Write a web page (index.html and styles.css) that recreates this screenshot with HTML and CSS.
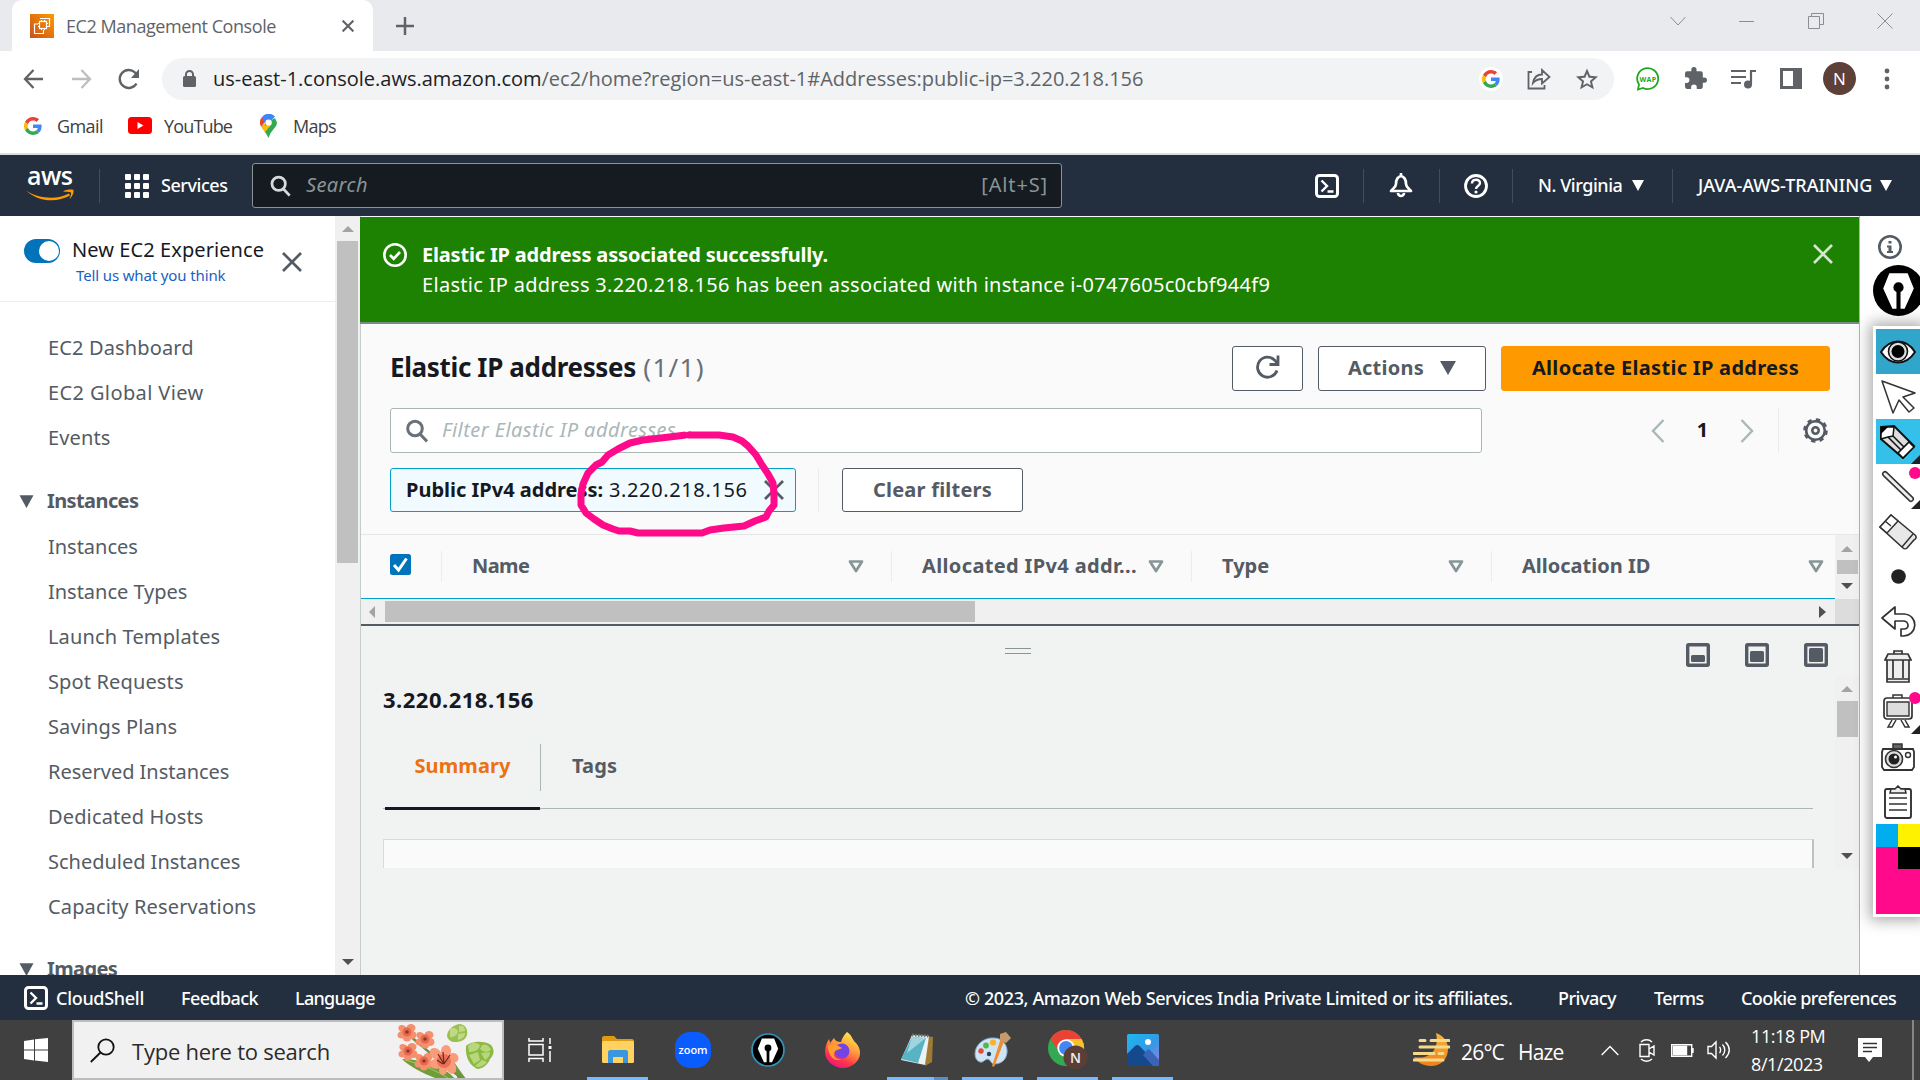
FILE: index.html
```html
<!DOCTYPE html>
<html lang="en">
<head>
<meta charset="utf-8">
<title>EC2 Management Console</title>
<link rel="stylesheet" href="styles.css">
</head>
<body>
<svg class="defs" width="0" height="0" aria-hidden="true">
  <symbol id="g" viewBox="0 0 48 48"><path fill="#ea4335" d="M24 9.500c3.500 0 6.700 1.200 9.200 3.600l6.900-6.900C35.900 2.400 30.500 0 24 0 14.600 0 6.500 5.400 2.600 13.200l8 6.200C12.400 13.700 17.700 9.500 24 9.500z"/><path fill="#4285f4" d="M47 24.600c0-1.600-.2-3.100-.4-4.600H24v9h12.900c-.6 3-2.200 5.500-4.700 7.200l7.700 6C44.400 38 47 31.800 47 24.600z"/><path fill="#fbbc05" d="M10.500 28.600A14.500 14.500 0 0 1 10.500 19.400l-8-6.200a24 24 0 0 0 0 21.600z"/><path fill="#34a853" d="M24 48c6.500 0 11.900-2.100 15.900-5.800l-7.700-6c-2.200 1.400-4.900 2.300-8.200 2.300-6.300 0-11.600-4.200-13.500-9.900l-8 6.200C6.500 42.600 14.600 48 24 48z"/></symbol>
  <symbol id="shell" viewBox="0 0 24 24"><rect x="1.500" y="1.500" width="21" height="21" rx="3" fill="none" stroke="#fff" stroke-width="3"/><path d="M6.500 6.500l5.500 5.500-5.500 5.500M12.500 17.500h6" fill="none" stroke="#fff" stroke-width="2.400"/></symbol>
  <symbol id="mag" viewBox="0 0 22 24"><circle cx="9" cy="9.500" r="7.300" fill="none" stroke="currentColor" stroke-width="3"/><path d="M14 15l7 7.500" stroke="currentColor" stroke-width="3"/></symbol>
  <symbol id="x" viewBox="0 0 20 20"><path d="M1 1l18 18M19 1L1 19" stroke="currentColor" stroke-width="2.700"/></symbol>
  <symbol id="down" viewBox="0 0 12 12"><path d="M0 1h12L6 12z" fill="currentColor"/></symbol>
  <symbol id="sort" viewBox="0 0 16 13"><path d="M2 1.500h12L8 11z" fill="none" stroke="#879596" stroke-width="2.700" stroke-linejoin="round"/></symbol>
  <symbol id="up-s" viewBox="0 0 12 6"><path d="M0 6L6 0l6 6z" fill="#a3a3a3"/></symbol>
  <symbol id="down-s" viewBox="0 0 12 6"><path d="M0 0h12L6 6z" fill="#505050"/></symbol>
  <symbol id="nib" viewBox="0 0 50 50"><path fill="#fff" d="M16 8h18l6 15-9 20h-4V26h-4v17h-4L10 23z"/><circle cx="25" cy="22" r="5" fill="#000"/></symbol>
</svg>

<div class="tabs">
  <div class="tab">
    <svg width="24" height="24" viewBox="0 0 24 24"><defs><linearGradient id="fav" x1="0" y1="1" x2="1" y2="0"><stop stop-color="#c8511b"/><stop offset="1" stop-color="#f90"/></linearGradient></defs><path fill="url(#fav)" d="M0 0h24v24H0z"/><g fill="none" stroke="#fff" stroke-width="1.200"><rect x="9.500" y="7.500" width="7" height="7"/><path d="M10 4.500h9.500v8H17M8 10H4.500v9.500h9V16M11.500 6v2M14.500 6v2M11.500 14v2M14.500 14v2M8 9.500h2M8 12.500h2M16 9.500h2"/></g></svg>
    <span class="tab-title">EC2 Management Console</span>
    <svg class="tab-x" width="12" height="12" viewBox="0 0 20 20"><path d="M1 1l18 18M19 1L1 19" stroke="#5f6368" stroke-width="3.600"/></svg>
  </div>
  <svg class="plus" width="18" height="18" viewBox="0 0 18 18"><path d="M9 0v18M0 9h18" stroke="#5f6368" stroke-width="2.500"/></svg>
  <div class="win">
    <svg width="16" height="16" viewBox="0 0 16 16"><path d="M.5 4l7.500 8 7.500-8"/></svg>
    <svg width="16" height="16" viewBox="0 0 16 16"><path d="M0 8.500h15"/></svg>
    <svg width="16" height="16" viewBox="0 0 16 16"><path d="M.5 3.500h11v12H.5zM3.500 3V.5h12v11H12"/></svg>
    <svg width="16" height="16" viewBox="0 0 16 16"><path d="M.5.500l15 15M15.500.5l-15 15"/></svg>
  </div>
</div>

<div class="toolbar">
  <div class="nav-btns">
    <svg width="21" height="20" viewBox="0 0 21 20"><path d="M20 10H2M10.500 1L2 10l8.500 9" fill="none" stroke="#5f6368" stroke-width="2.300"/></svg>
    <svg width="21" height="20" viewBox="0 0 21 20"><path d="M1 10h18M10.500 1l8.500 9-8.500 9" fill="none" stroke="#bcbec1" stroke-width="2.300"/></svg>
    <svg width="22" height="22" viewBox="0 0 22 22"><path d="M18.500 15.500A9 9 0 1 1 17 4.500l2 2.500" fill="none" stroke="#5f6368" stroke-width="2.400"/><path d="M21 1v9h-8z" fill="#5f6368"/></svg>
  </div>
  <div class="omni">
    <svg width="13" height="18" viewBox="0 0 13 18"><rect y="6" width="13" height="11" rx="1.500" fill="#5f6368"/><path d="M3 7V4.500a3.500 3.500 0 0 1 7 0V7" fill="none" stroke="#5f6368" stroke-width="2"/></svg>
    <span class="url"><b>us-east-1.console.aws.amazon.com</b>/ec2/home?region=us-east-1#Addresses:public-ip=3.220.218.156</span>
    <span class="gbadge"><svg width="18" height="18"><use href="#g"/></svg></span>
    <svg width="24" height="22" viewBox="0 0 24 22" fill="none" stroke="#5f6368" stroke-width="1.800"><path d="M5 4H1.500v16.500h16V17M6 15c1-6 4-8.500 9-8.500V2l7.500 7L15 15.500V11c-4 0-6.500 1-9 4z"/></svg>
    <svg class="star" width="22" height="22" viewBox="0 0 24 24"><path fill="#5f6368" d="M24 9.200l-8.600-.7L12 .5 8.600 8.500 0 9.200l6.500 5.700-2 8.400 7.500-4.500 7.500 4.500-2-8.400zM12 16.600l-4.300 2.600 1.100-4.900-3.700-3.300 5-.4L12 6l1.900 4.600 5 .4-3.700 3.300 1.100 4.900z"/></svg>
  </div>
  <div class="exts">
    <svg width="24" height="24" viewBox="0 0 24 24"><path d="M2 22.500l1-5A10.500 10.500 0 1 1 7 21z" fill="#fff" stroke="#22a722" stroke-width="1.800"/><text x="12" y="14.500" class="wap">WAP</text></svg>
    <svg width="23" height="23" viewBox="1 1 22 22"><path fill="#5f6368" d="M20.500 11H19V7c0-1.100-.9-2-2-2h-4V3.500a2.500 2.500 0 0 0-5 0V5H4c-1.100 0-2 .9-2 2v3.800h1.500a2.700 2.700 0 0 1 0 5.400H2V20c0 1.100.9 2 2 2h3.800v-1.500a2.700 2.700 0 0 1 5.400 0V22H17c1.100 0 2-.9 2-2v-4h1.500a2.500 2.500 0 0 0 0-5z"/></svg>
    <svg width="25" height="20" viewBox="0 0 25 20"><path d="M0 2h15M0 8h15M0 14h10" stroke="#5f6368" stroke-width="2.200"/><path d="M20 15V2h5" fill="none" stroke="#5f6368" stroke-width="2.200"/><circle cx="17" cy="15.500" r="4" fill="#5f6368"/></svg>
    <svg width="22" height="21" viewBox="0 0 22 21"><path fill="#5f6368" fill-rule="evenodd" d="M0 0h22v21H0zM3 3v15h10V3z"/></svg>
    <span class="avatar">N</span>
    <svg width="6" height="22" viewBox="0 0 6 22" fill="#5f6368"><circle cx="3" cy="3" r="2.400"/><circle cx="3" cy="11" r="2.400"/><circle cx="3" cy="19" r="2.400"/></svg>
  </div>
</div>

<div class="bookmarks">
  <svg width="18" height="18"><use href="#g"/></svg><span class="bm1">Gmail</span>
  <svg width="24" height="17" viewBox="0 0 24 17"><rect width="24" height="17" rx="3.500" fill="#f00"/><path d="M9.500 5v7l6-3.500z" fill="#fff"/></svg><span class="bm2">YouTube</span>
  <svg width="17" height="24" viewBox="0 0 17 24"><path fill="#34a853" d="M1 12l4 6c1.500 2 2.500 4 3.500 6 1-3 2-5 4-7.500 2-2.500 4.500-5 4.500-8L15 4z"/><path fill="#fbbc04" d="M1 12.500L11.500 5l.5 5-7 8z"/><path fill="#ea4335" d="M2 3a8.500 8.500 0 0 0-1 9.500L6 7z"/><path fill="#4285f4" d="M2 3a8.500 8.500 0 0 1 13-.5L6 12z"/><circle cx="8.500" cy="8.500" r="3.100" fill="#fff"/></svg><span class="bm3">Maps</span>
</div>

<header class="aws">
  <div class="aws-left">
    <div class="logo"><span>aws</span><svg width="48" height="12" viewBox="0 0 48 12"><path d="M0 1.500C13 10 31 11 43 4.500l1 2C31 14 12 13 0 1.500z" fill="#f90"/><path d="M37 2.500C40 .5 45 0 47.500 1c.5 3-1.500 7-4 9 1-3 2-5 1.500-6.500-2-.8-5-.5-8-1z" fill="#f90"/></svg></div>
    <i class="sep"></i>
    <svg width="24" height="24" viewBox="0 0 24 24" fill="#fff"><rect width="6" height="6" rx="1"/><rect x="9" width="6" height="6" rx="1"/><rect x="18" width="6" height="6" rx="1"/><rect y="9" width="6" height="6" rx="1"/><rect x="9" y="9" width="6" height="6" rx="1"/><rect x="18" y="9" width="6" height="6" rx="1"/><rect y="18" width="6" height="6" rx="1"/><rect x="9" y="18" width="6" height="6" rx="1"/><rect x="18" y="18" width="6" height="6" rx="1"/></svg>
    <span class="nt">Services</span>
    <div class="nsearch"><svg width="21" height="22"><use href="#mag"/></svg><em>Search</em><span>[Alt+S]</span></div>
  </div>
  <div class="aws-right">
    <svg width="24" height="24"><use href="#shell"/></svg>
    <i class="sep"></i>
    <svg width="24" height="25" viewBox="0 0 24 25"><path d="M12 3c-4 1-5 4-5 8 0 3-3 4.500-5 7h20c-2-2.500-5-4-5-7 0-4-1-7-5-8z" fill="none" stroke="#fff" stroke-width="2.700" stroke-linejoin="round"/><path d="M12 0v4M9 20a3 3 0 0 0 6 0" fill="none" stroke="#fff" stroke-width="2.600"/></svg>
    <i class="sep"></i>
    <svg width="24" height="24" viewBox="0 0 24 24"><circle cx="12" cy="12" r="10.500" fill="none" stroke="#fff" stroke-width="2.800"/><path d="M8 9.500c0-5 8-5 8-.5 0 3-4 3-4 6" fill="none" stroke="#fff" stroke-width="2.400"/><circle cx="12" cy="18" r="1.600" fill="#fff"/></svg>
    <i class="sep"></i>
    <span class="nt">N. Virginia</span><svg class="w" width="12" height="12"><use href="#down"/></svg>
    <i class="sep"></i>
    <span class="nt acct">JAVA-AWS-TRAINING</span><svg class="w" width="12" height="12"><use href="#down"/></svg>
  </div>
</header>

<div class="page">
  <aside class="side">
    <div class="exp">
      <i class="toggle"></i>
      <div><p class="exp-t">New EC2 Experience</p><a>Tell us what you think</a></div>
      <svg width="20" height="20"><use href="#x"/></svg>
    </div>
    <nav class="menu">
      <a>EC2 Dashboard</a><a class="wide">EC2 Global View</a><a>Events</a>
      <h3><svg width="15" height="14"><use href="#down"/></svg>Instances</h3>
      <a class="tight">Instances</a><a class="tight">Instance Types</a><a>Launch Templates</a><a>Spot Requests</a><a>Savings Plans</a><a class="tight">Reserved Instances</a><a>Dedicated Hosts</a><a class="tight">Scheduled Instances</a><a>Capacity Reservations</a>
      <h3 class="last"><svg width="15" height="14"><use href="#down"/></svg>Images</h3>
    </nav>
  </aside>
  <div class="vbar side-bar"><svg width="12" height="6"><use href="#up-s"/></svg><i></i><svg class="end" width="12" height="6"><use href="#down-s"/></svg></div>

  <main class="main">
    <section class="flash">
      <svg width="24" height="24" viewBox="0 0 24 24"><circle cx="12" cy="12" r="10.700" fill="none" stroke="#fff" stroke-width="2.600"/><path d="M7 12l3.700 3.700L17 9" fill="none" stroke="#fff" stroke-width="2.700"/></svg>
      <div><strong>Elastic IP address associated successfully.</strong><p>Elastic IP address 3.220.218.156 has been associated with instance i-0747605c0cbf944f9</p></div>
      <svg class="fx" width="20" height="20"><use href="#x"/></svg>
    </section>
    <section class="list">
      <div class="head">
        <h1>Elastic IP addresses <span>(1/1)</span></h1>
        <button class="btn ref"><svg width="25" height="25" viewBox="0 0 25 25"><path d="M22 15.500A10 10 0 1 1 20 5.500l2 2.500" fill="none" stroke="#545b64" stroke-width="2.800"/><path d="M23 .500v9h-8.500" fill="none" stroke="#545b64" stroke-width="2.800"/></svg></button>
        <button class="btn act">Actions<svg width="16" height="14" viewBox="0 0 16 14"><path d="M0 0h16L8 14z" fill="#545b64"/></svg></button>
        <button class="btn pri">Allocate Elastic IP address</button>
      </div>
      <div class="filter">
        <div class="fin"><svg width="22" height="24"><use href="#mag"/></svg><em>Filter Elastic IP addresses</em></div>
        <div class="pager">
          <svg width="14" height="24" viewBox="0 0 14 24"><path d="M12.500 1L2 12l10.500 11"/></svg><b>1</b><svg width="14" height="24" viewBox="0 0 14 24"><path d="M1.500 1L12 12 1.500 23"/></svg>
        </div>
        <svg class="gear" width="25" height="25" viewBox="-12.500 -12.500 25 25"><circle r="9.300" fill="none" stroke="#545b64" stroke-width="2.600"/><circle r="10.900" fill="none" stroke="#545b64" stroke-width="2.800" stroke-dasharray="4.300 4.260"/><circle r="3.200" fill="none" stroke="#545b64" stroke-width="2.600"/></svg>
      </div>
      <div class="tokens">
        <div class="token"><b>Public IPv4 address:</b><span>3.220.218.156</span><svg width="20" height="20"><use href="#x"/></svg></div>
        <i></i>
        <button class="btn clr">Clear filters</button>
      </div>
      <div class="table">
        <div class="thead">
          <div class="cb"><svg width="21" height="21" viewBox="0 0 21 21"><rect width="21" height="21" rx="2.500" fill="#0073bb"/><path d="M4 11l4.500 5L16.500 4.500" fill="none" stroke="#fff" stroke-width="3"/></svg></div>
          <div class="th"><span class="c1">Name</span><svg width="16" height="13"><use href="#sort"/></svg></div>
          <div class="th"><span class="c2">Allocated IPv4 addr...</span><svg width="16" height="13"><use href="#sort"/></svg></div>
          <div class="th"><span>Type</span><svg width="16" height="13"><use href="#sort"/></svg></div>
          <div class="th"><span>Allocation ID</span><svg width="16" height="13"><use href="#sort"/></svg></div>
        </div>
        <div class="vbar tbar"><svg width="12" height="6"><use href="#up-s"/></svg><i></i><svg class="end" width="12" height="6"><use href="#down-s"/></svg></div>
      </div>
      <div class="hbar"><svg width="6" height="12" viewBox="0 0 6 12"><path d="M6 0v12L0 6z" fill="#a3a3a3"/></svg><i></i><svg class="end" width="7" height="12" viewBox="0 0 7 12"><path d="M0 0v12l7-6z" fill="#505050"/></svg><b></b></div>
    </section>
    <section class="split">
      <div class="tools">
        <i class="grip"></i>
        <svg width="24" height="24" viewBox="0 0 24 24"><rect x="1.700" y="1.700" width="20.600" height="20.600" rx="1" fill="none" stroke="#545b64" stroke-width="3.400"/><rect x="5" y="12" width="14" height="7" rx="1.500" fill="#545b64"/></svg>
        <svg width="24" height="24" viewBox="0 0 24 24"><rect x="1.700" y="1.700" width="20.600" height="20.600" rx="1" fill="none" stroke="#545b64" stroke-width="3.400"/><rect x="5" y="8" width="14" height="11" rx="1.500" fill="#545b64"/></svg>
        <svg width="24" height="24" viewBox="0 0 24 24"><rect x="1.700" y="1.700" width="20.600" height="20.600" rx="1" fill="none" stroke="#545b64" stroke-width="3.400"/><rect x="5" y="5" width="14" height="14" rx="1.500" fill="#545b64"/></svg>
      </div>
      <div class="detail">
        <div class="dcol">
          <h2>3.220.218.156</h2>
          <div class="dtabs"><span class="on">Summary</span><span class="off">Tags</span></div>
          <div class="card"></div>
        </div>
        <div class="vbar dbar"><svg width="12" height="6"><use href="#up-s"/></svg><i></i><svg class="end" width="12" height="6"><use href="#down-s"/></svg></div>
      </div>
    </section>
  </main>
  <div class="gutter">
    <svg width="24" height="24" viewBox="0 0 24 24"><circle cx="12" cy="12" r="10.700" fill="none" stroke="#545b64" stroke-width="2.600"/><path d="M10.500 6h3v2.500h-3zM9 10.500h4.500V16H15v2H9v-2h1.500v-3.500H9z" fill="#545b64"/></svg>
  </div>
</div>

<footer class="foot">
  <svg width="24" height="24"><use href="#shell"/></svg><span class="f1">CloudShell</span><span class="f2">Feedback</span><span class="f3">Language</span>
  <span class="f4">© 2023, Amazon Web Services India Private Limited or its affiliates.</span><span class="f5">Privacy</span><span class="f6">Terms</span><span class="f7">Cookie preferences</span>
</footer>

<div class="taskbar">
  <div class="start"><svg width="24" height="24" viewBox="0 0 24 24"><path fill="#fff" d="M0 3l10-1.500v10H0zM11 1.300L24 0v11.500H11zM0 12.500h10v10L0 21zM11 12.500h13V24l-13-1.500z"/></svg></div>
  <div class="tsearch">
    <svg width="25" height="25" viewBox="0 0 25 25"><circle cx="16" cy="9" r="7.700" fill="none" stroke="#111" stroke-width="1.800"/><path d="M10.500 14.500L.8 24" stroke="#111" stroke-width="1.800"/></svg>
    <span>Type here to search</span>
    <svg class="flower" width="102" height="56" viewBox="0 0 102 56">
      <path d="M5 35c12 0 25 3 36 8 8 3 14 8 18 13H43C28 50 14 44 5 35z" fill="#6f9e38"/><path d="M8 36c15 4 31 10 46 20" stroke="#a9c46c" fill="none"/>
      <path d="M13 12c8 8 28 26 54 44M50 21c3 12 10 22 20 35h-9z" fill="#6d9a3c"/><path d="M13 12c12 10 30 26 54 44" stroke="#6f8f45" stroke-width="2.500" fill="none"/>
      <g id="b" fill="#f58f6e"><ellipse cx="6" cy="5" rx="5" ry="3.500" transform="rotate(30 6 5)"/><ellipse cx="14" cy="4" rx="4.500" ry="4"/><ellipse cx="5" cy="11" rx="4.500" ry="3.500"/><ellipse cx="15" cy="11" rx="4.500" ry="4"/><ellipse cx="10" cy="14" rx="4" ry="3.500"/><circle cx="10" cy="8" r="4.500" fill="#e4694f"/><circle cx="10" cy="8" r="1.800" fill="#8f3628"/></g>
      <use href="#b" x="18" y="7"/><use href="#b" x="1" y="19"/><use href="#b" x="17" y="29"/>
      <g fill="#fa9b7b"><ellipse cx="39" cy="30" rx="5" ry="7" transform="rotate(-50 39 30)"/><ellipse cx="49" cy="27" rx="5" ry="6"/><ellipse cx="56" cy="34" rx="5.500" ry="5"/><ellipse cx="39" cy="40" rx="6" ry="5"/><ellipse cx="54" cy="43" rx="5" ry="7" transform="rotate(-20 54 43)"/><ellipse cx="46" cy="46" rx="4" ry="5"/><circle cx="47" cy="37" r="7" fill="#ec7257"/></g><path d="M47 40l-6-10M47 40l-1-12M47 40l6-9M46 40l-6-4" stroke="#6e271e" stroke-width="1.200" fill="none"/>
      <path d="M50 12c0-7 8-12 13-12 6 1 8 6 7 11-2 6-7 7-12 7-4 0-7-2-8-6z" fill="#9bc052"/><path d="M53 5c4-2 6-1 8 2-1 4-3 6-8 6zM62 2c4-1 6 1 6 5l-6 1zM61 10l7-1c0 4-3 6-7 7z" fill="#bfd985"/>
      <path d="M69 22c5-5 18-6 25-1 4 5 3 10-1 14-2 6-8 10-13 10-7-4-12-11-11-23z" fill="#8db943"/><path d="M71 22c4-4 8-4 12-1-1 5-5 7-11 7zM85 21c4-1 8 1 9 5-4 3-8 2-11-1zM72 31l9-3 2 8-6 4zM84 29l9-1c0 4-2 6-5 8zM78 42l7-6 5 2c-2 3-6 5-10 5z" fill="#b6d77a"/>
    </svg>
  </div>
  <div class="tview"><svg width="24" height="24" viewBox="0 0 24 24" fill="none" stroke="#fff" stroke-width="1.500"><path d="M1 0v3h14V0M1 6.500h14v10.500H1zM1 24v-3.500h14V24M22 0v6M22 13v11"/><path d="M20.500 8h3v3h-3z" fill="#fff" stroke="none"/></svg></div>
  <div class="apps">
    <div class="on"><svg width="34" height="28" viewBox="0 0 34 28"><path d="M1 2c0-1 1-2 2-2h10l3 3h15c1 0 2 1 2 2v8H1z" fill="#e09a12"/><rect x="1" y="5" width="32" height="22" rx="1.500" fill="#ffd262"/><path d="M7 27V16c0-1 1-2 2-2h16c1 0 2 1 2 2v11h-5v-6H12v6z" fill="#3a96dd"/></svg></div>
    <div><svg width="36" height="36" viewBox="0 0 36 36"><rect width="36" height="36" rx="15" fill="#0b5cff"/><text x="18" y="21.500" class="zm">zoom</text></svg></div>
    <div><svg width="34" height="34" viewBox="0 0 50 50"><circle cx="25" cy="25" r="23.500" fill="#000" stroke="#3095bd" stroke-width="2.500"/><use href="#nib"/></svg></div>
    <div><svg width="35" height="36" viewBox="0 0 35 36"><defs><linearGradient id="ff" x1=".8" y1="0" x2=".3" y2="1"><stop stop-color="#fff14f"/><stop offset=".45" stop-color="#ff9640"/><stop offset=".75" stop-color="#ff3647"/><stop offset="1" stop-color="#e31587"/></linearGradient></defs><path fill="url(#ff)" d="M22 0c6 4 5 8 9 11 3 3 4 7 4 10 0 8-8 15-17 15S0 29 0 20c0-5 2-10 4-13l1 4 4-5c1 3 4 4 7 4 1-4 3-7 6-10z"/><circle cx="17" cy="19" r="7.500" fill="#7542e5"/><path d="M3 14c4-3 8-2 14 2-3 2-6 1-8 5-1 4 3 7 8 6-8 4-14-4-14-13z" fill="#ff9d2e"/></svg></div>
    <div class="on multi"><svg width="35" height="34" viewBox="0 0 35 34"><path d="M26 3l7 1-1 25-7 4z" fill="#a07a35"/><path d="M12 2l17 1-4 29-24-5z" fill="#e9f3f4"/><path d="M12 4l14 1-8 25-17-4z" fill="#58b3c4"/><path d="M12 4l14 1L7 20z" fill="#9fd6de"/><path d="M12 2l17 1" stroke="#6d7577" stroke-width="3" stroke-dasharray="1.500 1.500"/></svg></div>
    <div class="on"><svg width="37" height="42" viewBox="0 0 37 42"><path d="M1 25C1 15 11 8 20 9c9 0 14 8 13 15-1 8-7 11-13 11-3 0-3-4-6-5-3 0-5 4-8 3-3-1-5-4-5-8z" fill="#cfe4f5" stroke="#83abc9"/><circle cx="7" cy="22" r="2.700" fill="#e3493c"/><circle cx="12" cy="16.500" r="2.900" fill="#54b948"/><circle cx="19" cy="13.500" r="3.100" fill="#f9b22c"/><circle cx="15" cy="25" r="2.200" fill="#29445e"/><path d="M31 10L20 38l-2-1 9-28z" fill="#ef8e2b"/><path d="M26 5l6-2 5 6-5 5-6-2z" fill="#c79a6b"/></svg></div>
    <div class="on"><svg width="40" height="40" viewBox="0 0 40 40"><circle cx="18" cy="18" r="18" fill="#34a853"/><path d="M2.400 9A18 18 0 0 1 33.600 9L36 14 18 18 10 20z" fill="#ea4335"/><path d="M33.600 9H18l8 14-8 13A18 18 0 0 0 33.600 9z" fill="#fbc02d"/><circle cx="18" cy="18" r="8.700" fill="#fff"/><circle cx="18" cy="18" r="6.900" fill="#4285f4"/><circle cx="27.500" cy="27.500" r="12" fill="#5a3f36"/><text x="27.500" y="32.500" class="nn">N</text></svg></div>
    <div class="on"><svg width="32" height="32" viewBox="0 0 32 32"><defs><linearGradient id="ph" x2="1" y2="1"><stop stop-color="#1fb6ee"/><stop offset=".55" stop-color="#329ae8"/><stop offset="1" stop-color="#a27bd9"/></linearGradient></defs><rect width="32" height="32" rx="1.500" fill="url(#ph)"/><path d="M0 20l8-8c1.500-1.500 3-1.500 4.500 0L32 32H0z" fill="#144a8c"/><path d="M16 21l4-5c1-1 2-1 3 0l9 10v6h-6z" fill="#3a64b8"/><circle cx="21" cy="8" r="3" fill="#fff"/></svg></div>
  </div>
  <div class="tray">
    <svg width="37" height="34" viewBox="0 0 37 34"><defs><linearGradient id="mo" x2="0" y2="1"><stop stop-color="#f5b63a"/><stop offset="1" stop-color="#f0801a"/></linearGradient></defs><path d="M23 0c8 3 12 9 12 16 0 10-7 17-17 17-8 0-14-4-17-9 14 3 26-6 22-24z" fill="url(#mo)"/><path d="M7 7.500h5M18 7.500h18M7 14h29M1 20.500h20M26 20.500h4M1 27h29" stroke="#f7d98c" stroke-width="3" stroke-linecap="round"/></svg>
    <span class="deg">26°C</span><span class="haze">Haze</span>
    <svg width="18" height="11" viewBox="0 0 18 11"><path d="M.7 10L9 1.500l8.300 8.500"/></svg>
    <svg width="17" height="23" viewBox="0 0 17 23"><path d="M1 5.500h9v12H1zM10 10l5-3v9l-5-3M2 3c3-3 8-3 11 0M2 20c3 3 8 3 11 0"/></svg>
    <svg width="23" height="13" viewBox="0 0 23 13"><path d="M.7.700h20v11.600H.7zM22 4v5"/><path d="M2.500 2.500h13v8h-13z" fill="#fff"/></svg>
    <svg width="23" height="20" viewBox="0 0 23 20"><path d="M1 6.500h3.500L9 2v16l-4.500-4.500H1zM12.500 7c1.500 1.500 1.500 4.500 0 6M15.500 4.500c3 3 3 8 0 11M18.500 2c5 5 5 11 0 16"/></svg>
    <div class="clock"><span>11:18 PM</span><span>8/1/2023</span></div>
    <svg width="24" height="24" viewBox="0 0 24 24"><path d="M0 0h24v19H15l-4 5-4-5H0z" fill="#fff" stroke="none"/><path d="M5 5.500h14M5 9.500h14M5 13.500h9" stroke="#333" stroke-width="1.300"/></svg>
    <i class="desk"></i>
  </div>
</div>

<svg class="ink" width="210" height="114" viewBox="576 426 210 114"><path d="M686 435L661 438 643 440 630 443 618 449 608 455 602 462 596 465 588 473 583 484 581 494V505L586 513 594 519 603 525 613 529 619 531 630 531 638 533H702L710 530 724 528 744 526 755 521 766 517 769 511 774 505V494L773 483 768 474 762 465 756 455 748 446 742 441 733 437 719 435 688 435 687 432"/></svg>

<svg class="pen-badge" width="51" height="51" viewBox="0 0 50 50"><circle cx="25" cy="25" r="25" fill="#000"/><use href="#nib"/></svg>
<div class="pens">
  <div class="p eye"><svg width="36" height="24" viewBox="0 0 36 24"><path d="M1 12C10-2 26-2 35 12 26 26 10 26 1 12z" fill="#fff" stroke="#111" stroke-width="2"/><circle cx="18" cy="11.500" r="9.500" fill="#ddd" stroke="#111" stroke-width="1.600"/><circle cx="18" cy="11.500" r="6.500" fill="#000"/></svg></div>
  <div class="p"><svg width="36" height="34" viewBox="0 0 36 34"><path d="M2 1l33 12-12 4 11 11-5 4-10-12-6 13z" fill="#fff" stroke="#333" stroke-width="1.500" stroke-linejoin="round"/></svg></div>
  <div class="p pencil cor"><svg width="36" height="34" viewBox="0 0 36 34"><path d="M1 2l13-1 20 20-11 12L1 14z" fill="#ddd" stroke="#111" stroke-width="2"/><path d="M1 2h13l-1 9-5 1-7 2z" fill="#fff" stroke="#111" stroke-width="1.500"/><path d="M1 2h7L1 9z" fill="#000"/><path d="M13 11l15 15M8 12l14 14" stroke="#111" stroke-width="1.500" fill="none"/><path d="M29 17l5 5-11 11-5-5z" fill="#fff" stroke="#111" stroke-width="1.700"/></svg></div>
  <div class="p cor pink"><svg width="34" height="33" viewBox="0 0 34 33"><path d="M4 4l26 25" stroke="#333" stroke-width="6" stroke-linecap="round"/><path d="M4 4l26 25" stroke="#eee" stroke-width="3" stroke-linecap="round"/></svg></div>
  <div class="p"><svg width="38" height="36" viewBox="0 0 38 36"><path d="M12 1l24 20c2 2 1 4-1 5l-7 8c-1 1-3 1-4 0L1 13z" fill="#e8e8e8" stroke="#333" stroke-width="1.600"/><path d="M12 1l7 6-11 12-7-6z" fill="#fff" stroke="#333" stroke-width="1.500"/><path d="M34 20L23 33M6 7l6 5" fill="none" stroke="#333" stroke-width="1.500"/></svg></div>
  <div class="p"><svg width="15" height="15"><circle cx="7.500" cy="7.500" r="7.300" fill="#222"/></svg></div>
  <div class="p"><svg width="35" height="31" viewBox="0 0 35 31"><path d="M1 12L14 1v7h9c15 1 14 22-1 22h-2v-7h3c6 0 5-8-1-8h-8v8z" fill="#fff" stroke="#333" stroke-width="1.700" stroke-linejoin="round"/></svg></div>
  <div class="p"><svg width="28" height="33" viewBox="0 0 28 33"><path d="M10 4V1h8v3M4 4h20l3 6H1zM3 10v19h22V10M3 28v4h22v-4M9 10v18M19 10v18" fill="#eee" stroke="#333" stroke-width="1.700"/></svg></div>
  <div class="p cor pink"><svg width="30" height="35" viewBox="0 0 30 35"><path d="M10 4V1h9v3M9 26l-4 7h4l4-7M18 26l4 7h4l-4-7" fill="#fff" stroke="#333" stroke-width="1.500"/><rect x="1" y="4" width="28" height="21" rx="3" fill="#fff" stroke="#333" stroke-width="1.700"/><path d="M4 8h22v14H4z" fill="#ddd" stroke="#333" stroke-width="1.400"/></svg></div>
  <div class="p"><svg width="34" height="28" viewBox="0 0 34 28"><path d="M12 6V1h9v5" fill="#666" stroke="#333" stroke-width="1.500"/><path d="M2 6h30l1 3v15l-2 3H3l-2-3V9z" fill="#fff" stroke="#333" stroke-width="1.800"/><circle cx="13" cy="16" r="8.500" fill="#ddd" stroke="#333" stroke-width="1.600"/><circle cx="13" cy="16" r="5.500" fill="#222"/><circle cx="14.500" cy="14" r="1.500" fill="#fff"/><circle cx="27" cy="12" r="2.500" fill="none" stroke="#333" stroke-width="1.400"/></svg></div>
  <div class="p"><svg width="28" height="34" viewBox="0 0 28 34"><rect x="1" y="4" width="26" height="29" rx="2" fill="#fff" stroke="#333" stroke-width="1.900"/><path d="M6 8l1-4h4l3-3 3 3h4l1 4z" fill="#eee" stroke="#333" stroke-width="1.500"/><path d="M5 13h18M5 19h18M5 25h18" stroke="#333" stroke-width="1.500"/></svg></div>
  <div class="pal"><i class="cy"></i><i class="ye"></i><i class="pk"></i><i class="bk"></i></div>
</div>
</body>
</html>
```
FILE: styles.css
```css
* { box-sizing: border-box; }
body { margin: 0; width: 1920px; height: 1080px; overflow: hidden; position: relative; background: #fff; color: #16191f; font: 20px/30px "Noto Sans", sans-serif; display: flex; flex-direction: column; }
svg { display: block; flex: none; }
p, h1, h2, h3 { margin: 0; font-size: inherit; }
.defs { position: absolute; }
em { font-style: italic; }

/* browser chrome */
.tabs { height: 51px; flex: none; display: flex; align-items: center; background: #e8eaed; padding-left: 12px; font-family: "Open Sans", sans-serif; }
.tab { width: 361px; height: 51px; background: #fff; border-radius: 10px 10px 0 0; display: flex; align-items: center; padding-left: 18px; }
.tab-title { margin-left: 12px; width: 276px; font-size: 18px; letter-spacing: -.44px; color: #5f6368; }
.plus { margin-left: 23px; }
.win { margin-left: auto; margin-right: 27px; margin-top: -9px; display: flex; gap: 53px; }
.win path { fill: none; stroke: #8a8d91; stroke-width: 1; }
.toolbar { height: 55px; flex: none; display: flex; align-items: center; font-family: "Open Sans", sans-serif; }
.nav-btns { display: grid; grid-template-columns: 48px 47px 44px; align-items: center; padding-left: 23px; width: 162px; }
.omni { width: 1452px; height: 42px; border-radius: 21px; background: #f1f3f4; display: flex; align-items: center; padding-left: 21px; }
.url { margin-left: 17px; width: 1262px; font-size: 20px; color: #5f6368; white-space: nowrap; }
.url b { font-weight: 400; color: #202124; }
.gbadge { width: 24px; height: 24px; border-radius: 12px; background: #fff; display: grid; place-items: center; margin-left: 4px; margin-right: 24px; }
.star { margin-left: 25px; }
.exts { display: grid; grid-template-columns: 48px 47px 49px 43px 61px 10px; align-items: center; padding-left: 22px; }
.wap { font: 700 7px "Open Sans", sans-serif; fill: #22a722; text-anchor: middle; letter-spacing: .4px; }
.avatar { width: 33px; height: 33px; border-radius: 17px; background: #5d4037; color: #fff; font-size: 17px; line-height: 33px; text-align: center; }
.bookmarks { height: 49px; padding-bottom: 8px; flex: none; border-bottom: 2px solid #dadce0; display: flex; align-items: center; padding-left: 24px; font: 18px "Open Sans", sans-serif; color: #3c4043; }
.bm1 { margin-left: 15px; width: 71px; letter-spacing: -.57px; }
.bm2 { margin-left: 12px; width: 96px; letter-spacing: -.85px; }
.bm3 { margin-left: 16px; letter-spacing: -.7px; }

/* console header */
.aws { height: 61px; flex: none; background: #232f3e; color: #fff; display: flex; align-items: center; }
.aws-left { display: grid; grid-template-columns: 73px 26px 36px 91px 810px; align-items: center; padding-left: 26px; width: 1315px; }
.logo { display: flex; flex-direction: column; height: 46px; }
.logo span { font: 600 25px/25px "Open Sans", sans-serif; letter-spacing: -.6px; padding-left: 1px; }
.logo svg { margin-top: 1px; }
.sep { width: 1px; height: 34px; background: #414d5c; }
.nt { font-size: 18px; font-weight: 500; letter-spacing: -.45px; white-space: nowrap; padding-bottom: 2px; }
.acct { letter-spacing: 0; margin-left: 1px; }
.nsearch { height: 45px; border: 1px solid #879596; border-radius: 3px; background: #161a21; display: flex; align-items: center; padding: 0 13px 0 17px; color: #879596; }
.nsearch svg { color: #d5dbdb; }
.nsearch em { margin-left: 15px; letter-spacing: .39px; padding-bottom: 2px; }
.nsearch span { margin-left: auto; letter-spacing: .85px; padding-bottom: 2px; }
.aws-right { display: grid; grid-template-columns: 48px 26px 50px 25px 48px 26px 94px 40px 25px 183px 12px; align-items: center; }
.w { color: #fff; margin-top: -2px; }

/* page */
.page { height: 759px; flex: none; display: flex; overflow: hidden; }
.side { width: 335px; flex: none; overflow: hidden; }
.exp { height: 86px; border-bottom: 1px solid #eaeded; display: flex; padding: 19px 0 0 24px; }
.exp > div { width: 210px; margin-left: 12px; }
.exp > svg { margin-top: 17px; color: #545b64; width: 20px; }
.toggle { width: 36px; height: 24px; margin-top: 4px; border-radius: 12px; background: #0073bb; display: flex; padding: 2px 1px 2px 15px; }
.toggle::before { content: ""; width: 20px; height: 20px; border-radius: 10px; background: #fff; }
.exp-t { line-height: 29px; letter-spacing: .08px; white-space: nowrap; }
.exp a { display: block; margin: -1px 0 0 4px; font-size: 15px; line-height: 24px; letter-spacing: -.13px; color: #1c5fc0; }
.menu { padding-top: 23px; color: #545b64; }
.menu a { display: block; height: 45px; line-height: 45px; padding-left: 48px; letter-spacing: .14px; }
.menu .wide { letter-spacing: .38px; }
.menu .tight { letter-spacing: -.02px; }
.menu h3 { display: flex; align-items: center; height: 45px; margin-top: 18px; margin-bottom: 1px; padding-left: 19px; font-weight: 700; letter-spacing: -.6px; }
.menu h3 svg { margin-right: 13px; }
.menu .last { margin-top: 17px; }

.vbar { width: 25px; flex: none; background: #f0f0f0; display: flex; flex-direction: column; align-items: center; }
.vbar i { width: 21px; background: #c0c0c0; }
.vbar .end { margin-top: auto; }
.side-bar { padding: 10px 0 10px; }
.side-bar i { height: 322px; margin-top: 9px; }

.main { width: 1500px; flex: none; display: flex; flex-direction: column; background: #fafafa; border-left: 1px solid #c5cccc; border-right: 1px solid #aab7b8; }
.flash { height: 107px; margin: 1px 0 0 -1px; flex: none; background: #1d8102; color: #fff; display: flex; padding: 24px 0 0 23px; border-bottom: 2px solid #7c8a86; }
.flash svg { margin-top: 2px; }
.flash > div { width: 1407px; margin-left: 15px; }
.flash .fx { margin-top: 3px; margin-left: -16px; color: #d5e6d0; }
.flash strong, .flash p { display: block; line-height: 30px; margin-top: -1px; letter-spacing: -.18px; }
.flash p { margin-top: 0; letter-spacing: .3px; }

.head { display: flex; align-items: center; padding: 22px 0 0 29px; }
h1 { font-size: 26px; line-height: 42px; font-weight: 700; width: 842px; letter-spacing: -.35px; padding-bottom: 3px; }
h1 span { font-weight: 400; color: #687078; letter-spacing: 1.3px; margin-left: 1px; }
.btn { height: 45px; border: 1.500px solid #545b64; border-radius: 3px; background: #fff; color: #545b64; font: 700 20px "Noto Sans", sans-serif; padding: 0 0 2px; display: flex; align-items: center; justify-content: center; letter-spacing: .23px; white-space: nowrap; }
.ref { width: 71px; }
.act { width: 168px; margin-left: 15px; gap: 16px; }
.pri { width: 329px; margin-left: 15px; background: #f90; border-color: #f90; color: #16191f; letter-spacing: .3px; }
.filter { display: flex; align-items: center; padding: 17px 0 0 29px; }
.fin { width: 1092px; height: 45px; background: #fff; border: 1.500px solid #aab7b8; border-radius: 3px; display: flex; align-items: center; padding-left: 15px; color: #687078; }
.fin em { margin-left: 14px; color: #aab7b8; letter-spacing: .44px; padding-bottom: 2px; }
.pager { display: flex; align-items: center; justify-content: space-between; height: 45px; margin-left: 169px; padding-right: 24px; box-sizing: content-box; width: 103px; border-right: 1px solid #eaeded; }
.pager b { font-size: 20px; padding-bottom: 2px; }
.pager path { fill: none; stroke: #aab7b8; stroke-width: 2.400; }
.gear { margin-left: 24px; }
.tokens { display: flex; align-items: center; padding: 15px 0 0 29px; }
.token { width: 406px; height: 44px; border: 1px solid #00a1c9; border-radius: 3px; background: #f1faff; display: flex; align-items: center; padding-left: 15px; }
.token b { width: 203px; white-space: nowrap; }
.token span { letter-spacing: .62px; width: 139px; }
.token svg { margin-left: 16px; color: #545b64; }
.tokens i { width: 1px; height: 44px; margin: 0 23px 0 22px; background: #eaeded; }
.clr { width: 181px; height: 44px; }
.table { display: flex; height: 65px; margin-top: 22px; border-top: 1px solid #e3e7e7; }
.thead { width: 1474px; display: flex; align-items: center; border-bottom: 1.500px solid #00a1c9; color: #545b64; font-weight: 700; padding-bottom: 1px; }
.cb { width: 80px; padding-left: 29px; }
.cb svg { margin-top: -3px; }
.th { width: 300px; height: 31px; border-left: 1px solid #eaeded; display: flex; align-items: center; padding-left: 30px; }
.th:nth-child(2) { width: 450px; }
.th svg { margin-left: auto; margin-right: 27px; }
.th:last-child svg { margin-right: 11px; }
.th:last-child { width: 344px; }
.c1 { letter-spacing: -.6px; }
.c2 { letter-spacing: .36px; white-space: nowrap; }
.tbar { width: 24px; padding: 11px 0 10px; }
.tbar i { height: 14px; margin-top: 8px; }
.hbar { height: 27px; display: flex; align-items: center; background: #f0f0f0; padding-left: 8px; border-bottom: 2px solid #545b64; }
.hbar i { width: 590px; height: 21px; background: #c0c0c0; margin-left: 10px; }
.hbar b { width: 24px; height: 25px; background: #dcdcdc; margin-left: 9px; }
.hbar .end { margin-left: auto; }

.split { flex: 1; background: #f1f3f3; display: flex; flex-direction: column; }
.tools { display: flex; align-items: flex-end; height: 41px; padding-left: 644px; }
.grip { flex: none; width: 26px; height: 6px; margin-bottom: 13px; margin-right: 655px; border: solid #879596; border-width: 1.500px 0; }
.tools svg + svg { margin-left: 35px; }
.detail { display: flex; height: 202px; }
.dcol { width: 1474px; padding-left: 22px; }
h2 { font-size: 22px; line-height: 30px; letter-spacing: .5px; margin-top: 17px; font-weight: 700; }
.dtabs { height: 65px; margin-top: 30px; display: flex; border-bottom: 1px solid #aab7b8; width: 1430px; font-weight: 700; color: #545b64; }
.dtabs span { height: 47px; line-height: 43px; }
.dtabs .on { width: 155px; text-align: center; color: #ec7211; height: 66px; border-bottom: 3px solid #16191f; margin-left: 2px; letter-spacing: .1px; }
.dtabs .off { border-left: 1px solid #aab7b8; padding-left: 31px; letter-spacing: .15px; }
.card { height: 29px; width: 1431px; margin-top: 30px; border: 1px solid #d5dbdb; border-right: 2px solid #b9c3c3; border-bottom: 0; background: #fafafa; }
.dbar { width: 24px; margin-top: 9px; padding: 10px 0 10px; }
.dbar i { height: 36px; margin-top: 9px; }
.gutter { flex: 1; background: #fff; padding: 19px 0 0 18px; }

/* footer */
.foot { height: 45px; flex: none; background: #232f3e; color: #fff; display: flex; align-items: center; padding: 1px 0 0 24px; font-size: 18px; font-weight: 500; white-space: nowrap; }
.foot span { padding-bottom: 1px; }
.f1 { margin-left: 8px; width: 125px; letter-spacing: -.3px; }
.f2 { width: 114px; letter-spacing: -.59px; }
.f3 { width: 670px; letter-spacing: -.7px; }
.f4 { width: 593px; letter-spacing: -.38px; }
.f5 { width: 96px; letter-spacing: -.5px; }
.f6 { width: 87px; letter-spacing: -.6px; }
.f7 { letter-spacing: -.59px; }

/* taskbar */
.taskbar { height: 60px; flex: none; background: #404040; color: #fff; display: flex; align-items: center; font-family: "Open Sans", sans-serif; }
.start { width: 72px; padding-left: 24px; }
.tsearch { width: 432px; height: 60px; background: #f1f1f1; border: 2px solid #bdbdbd; display: flex; align-items: center; padding-left: 16px; color: #2b2b2b; overflow: hidden; }
.tsearch span { width: 265px; margin-left: 17px; margin-top: 1px; font-size: 22px; letter-spacing: -.24px; white-space: nowrap; }
.flower { margin-top: 4px; }
.tview { width: 76px; padding-left: 24px; }
.apps { display: flex; height: 60px; }
.apps div { width: 75px; display: grid; place-items: center; border: solid transparent; border-width: 0 7px; background-clip: padding-box; }
.apps .on { background-image: linear-gradient(#76b9ff, #76b9ff); background-repeat: no-repeat; background-size: 100% 3px; background-position: bottom; }
.apps .multi { background-image: linear-gradient(90deg, #76b9ff 77%, #5b8fc4 77%); }
.zm { font: 600 11px "Open Sans", sans-serif; fill: #fff; text-anchor: middle; }
.nn { font: 600 14px "Open Sans", sans-serif; fill: #eee; text-anchor: middle; }
.tray { margin-left: 233px; display: grid; grid-template-columns: 48px 57px 83px 38px 32px 36px 44px 107px 54px 8px; align-items: center; height: 60px; flex: 1; }
.tray svg path { fill: none; stroke: #fff; stroke-width: 1.400; }
.tray svg:first-child path:first-of-type { fill: url(#mo); stroke: none; }
.tray svg:first-child path:last-of-type { stroke: #f7d98c; stroke-width: 3; }
.tray svg:nth-of-type(4) path:last-child { fill: #fff; }
.tray svg:last-of-type path:first-child { fill: #fff; stroke: none; }
.tray svg:last-of-type path:last-child { stroke: #333; }
.deg, .haze { font-size: 21px; letter-spacing: -.8px; margin-top: 3px; }
.clock { display: flex; flex-direction: column; font-size: 18px; line-height: 28px; letter-spacing: -.4px; margin-top: -1px; white-space: nowrap; }
.desk { height: 60px; border-left: 2px solid #868686; }

/* screen annotation overlay */
.ink { position: absolute; left: 576px; top: 426px; }
.ink path { fill: none; stroke: #ff0a8a; stroke-width: 7; stroke-linejoin: round; }
.pen-badge { position: absolute; left: 1873px; top: 265px; }
.pens { position: absolute; left: 1873px; top: 326px; width: 50px; height: 591px; background: #fff; padding: 3px 0 3px 3px; box-shadow: 0 0 14px 3px rgba(0, 0, 0, .35); display: flex; flex-direction: column; }
.p { width: 44px; height: 45px; display: grid; place-items: center; position: relative; }
.eye { background: #31a5ca; }
.pencil { background: #35c0ea; }
.cor::after { content: ""; position: absolute; right: 0; bottom: 0; border-left: 9px solid transparent; border-bottom: 9px solid #222; }
.pink::before { content: ""; position: absolute; right: -1px; top: 3px; width: 12px; height: 12px; border-radius: 6px; background: #ff0a8a; }
.pal { height: 90px; width: 44px; display: grid; grid-template: 23px 22px 45px / 22px 22px; background: #ff0a8a; }
.cy { background: #00aeef; }
.ye { background: #fff200; }
.bk { background: #000; }
```
